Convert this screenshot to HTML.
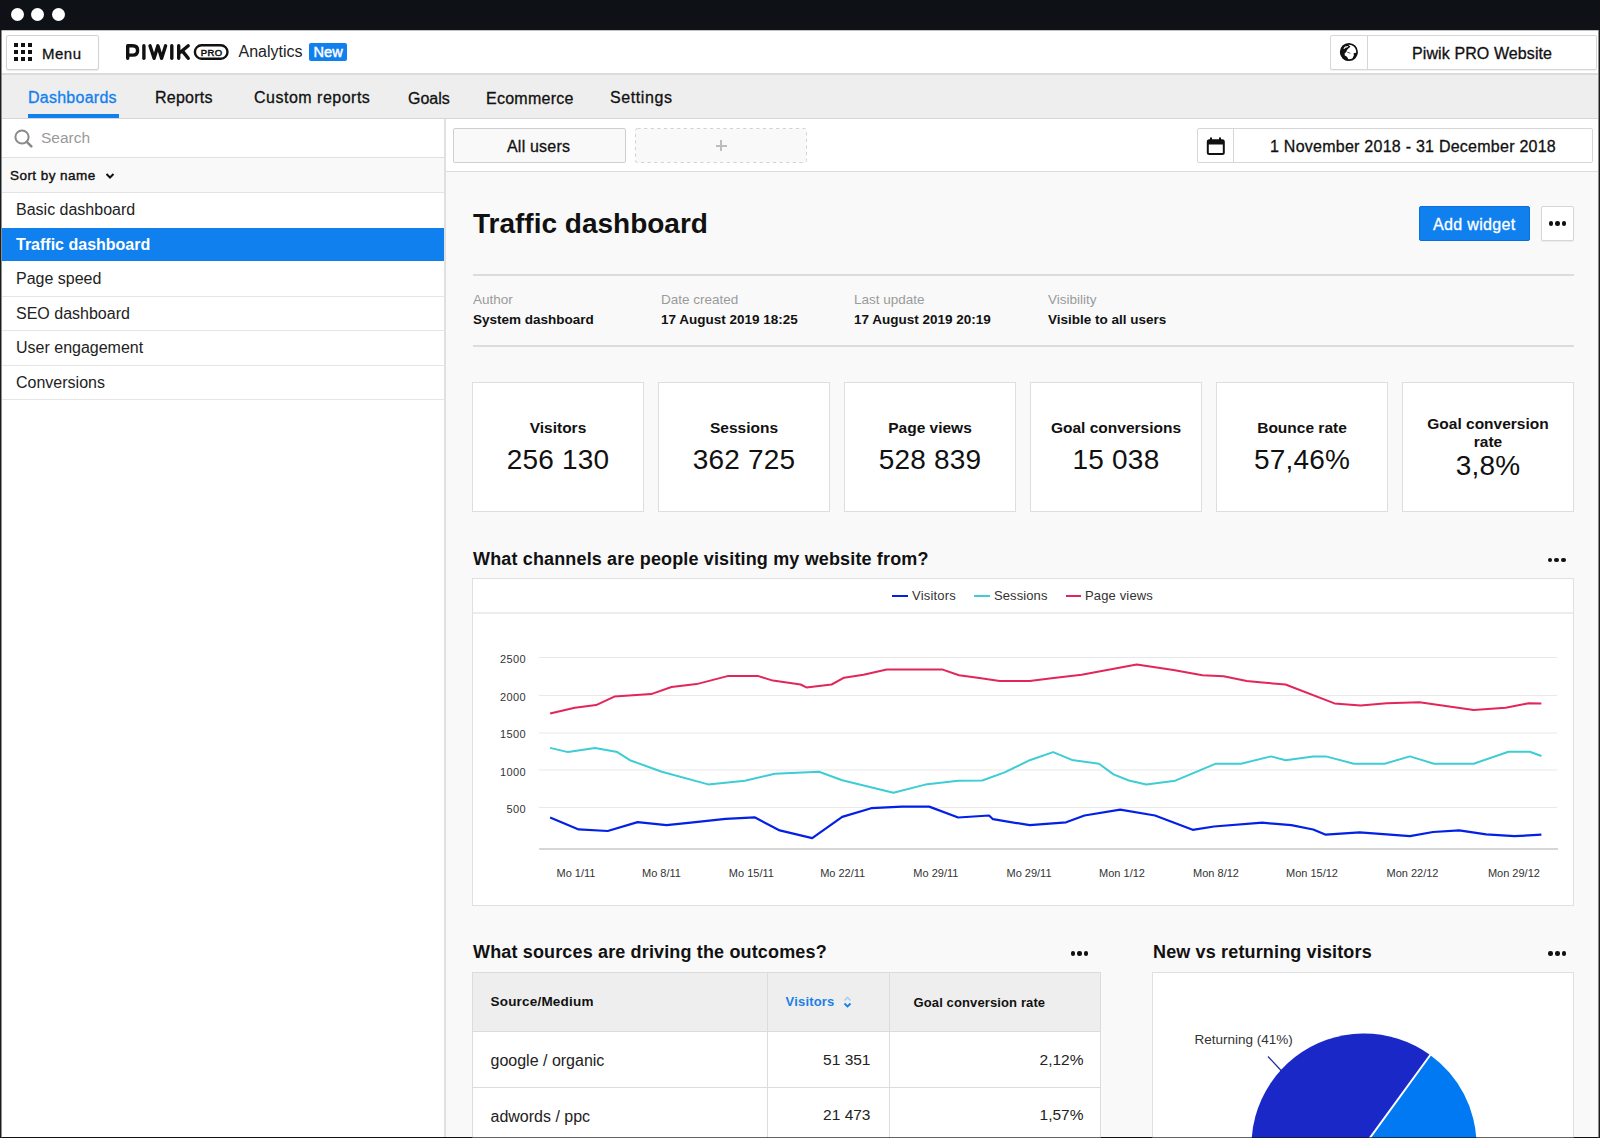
<!DOCTYPE html>
<html><head><meta charset="utf-8">
<style>
*{box-sizing:border-box;margin:0;padding:0}
html,body{width:1600px;height:1138px;overflow:hidden}
body{background:#0e1115;font-family:"Liberation Sans",sans-serif;color:#111;position:relative}
.a{position:absolute}
.t{position:absolute;line-height:1;white-space:nowrap}
.md{-webkit-text-stroke:0.3px currentColor}
.dot{position:absolute;width:13px;height:13px;border-radius:50%;background:#fff;top:8px}
.card{position:absolute;top:382px;width:172px;height:130px;background:#fff;border:1px solid #dedede}
.kl{position:absolute;left:0;width:100%;text-align:center;font-weight:700;font-size:15.5px;line-height:1;white-space:nowrap}
.kv{position:absolute;left:0;width:100%;text-align:center;font-size:28px;line-height:1;white-space:nowrap;letter-spacing:0.2px}
.sb{position:absolute;left:1px;width:443px;height:35px;border-bottom:1px solid #e6e6e6;background:#fff}
.sbt{position:absolute;left:15px;top:11px;font-size:16px;line-height:1;white-space:nowrap;color:#222}
.more{position:absolute;width:18px;height:5px}
.more i{position:absolute;top:0;width:4.5px;height:4.5px;border-radius:50%;background:#111}
</style></head><body>
<!-- traffic lights -->
<div class="dot" style="left:11px"></div>
<div class="dot" style="left:31px"></div>
<div class="dot" style="left:52px"></div>

<!-- page background -->
<div class="a" style="left:1px;top:30px;width:1597px;height:1107px;background:#f9f9f9"></div>
<!-- header -->
<div class="a" style="left:1px;top:30px;width:1597px;height:45px;background:#fff;border-bottom:2px solid #dcdcdc"></div>
<div class="a" style="left:6px;top:35px;width:93px;height:35px;border:1px solid #d2d2d2;border-radius:2px;background:#fff;box-shadow:0 1px 1px rgba(0,0,0,.08)"></div>
<svg class="a" style="left:14px;top:43px" width="18" height="18" viewBox="0 0 18 18" fill="#111">
<rect x="0" y="0" width="4" height="4"/><rect x="7" y="0" width="4" height="4"/><rect x="14" y="0" width="4" height="4"/>
<rect x="0" y="7" width="4" height="4"/><rect x="7" y="7" width="4" height="4"/><rect x="14" y="7" width="4" height="4"/>
<rect x="0" y="14" width="4" height="4"/><rect x="7" y="14" width="4" height="4"/><rect x="14" y="14" width="4" height="4"/>
</svg>
<div class="t md" style="left:42px;top:45.8px;font-size:15px;color:#111;letter-spacing:0.5px">Menu</div>

<!-- logo -->
<svg class="a" style="left:0;top:0" width="240" height="70" viewBox="0 0 240 70">
<g fill="none" stroke="#111" stroke-width="3.4" stroke-linecap="round" stroke-linejoin="round">
<path d="M127.7 58.3 V45.7 H132.8 Q137.6 45.7 137.6 50.4 Q137.6 55.1 132.8 55.1 H127.7"/>
<path d="M143.9 45.7 V58.3"/>
<path d="M150 45.8 L154.1 58.3 L157.9 45.8 L161.6 58.3 L165.6 45.8"/>
<path d="M171.8 45.7 V58.3"/>
<path d="M178.7 45.7 V58.3 M188.2 45.8 L179.8 52.8 M182.3 50.9 L188.2 58.3"/>
</g>
<rect x="194.9" y="45.3" width="32.6" height="13.4" rx="6.7" fill="none" stroke="#111" stroke-width="2.4"/>
</svg>
<div class="t" style="left:200.8px;top:48px;font-size:9.5px;color:#111;-webkit-text-stroke:0.5px #111;letter-spacing:0.35px">PRO</div>
<div class="t" style="left:238.5px;top:44px;font-size:16px;color:#222">Analytics</div>
<div class="a" style="left:309px;top:43px;width:38px;height:18px;background:#1180ef;border-radius:2px"></div>
<div class="t" style="left:313.5px;top:45px;font-size:14.5px;color:#fff;-webkit-text-stroke:0.45px #fff;letter-spacing:0.1px">New</div>

<!-- website selector -->
<div class="a" style="left:1330px;top:35px;width:267px;height:35px;border:1px solid #d6d6d6;border-radius:2px;background:#fff;box-shadow:0 1px 1px rgba(0,0,0,.06)"></div>
<div class="a" style="left:1367px;top:36px;width:1px;height:33px;background:#d6d6d6"></div>
<svg class="a" style="left:1336px;top:40px" width="26" height="24" viewBox="0 0 26 24">
<circle cx="12.9" cy="12" r="8.2" fill="#fff" stroke="#111" stroke-width="1.7"/>
<path d="M5,9 C6,6.5 9,5 12,4.5 L14.5,6.8 L12.6,8.2 L11,10 L10.4,11.8 L8.6,13.6 L8.8,15.6 L11,16.8 L12,18.5 L12.4,20.8 C8,20.3 5,17 4.5,13 Z" fill="#111"/>
<path d="M7.4,8.6 L9,6.6 L12.4,6.1 L11.6,7.3 L9.6,7.8 L8.3,8.9 Z" fill="#fff"/>
<path d="M17.6,13.2 L21.3,12.6 C21.2,15.8 19.5,18.6 16.6,20 L16.9,17.2 L17.9,15.6 Z" fill="#111"/>
<path d="M11.3,12.2 L14.3,13.3" stroke="#444" stroke-width="0.9"/>
</svg>
<div class="t md" style="left:1412px;top:45.5px;font-size:16px;color:#111;letter-spacing:0.1px">Piwik PRO Website</div>

<!-- nav -->
<div class="a" style="left:1px;top:75px;width:1597px;height:44px;background:#eeeeee;border-bottom:1px solid #d6d6d6"></div>
<div class="t md" style="left:28px;top:90px;font-size:16px;color:#1180ef;letter-spacing:0.25px">Dashboards</div>
<div class="a" style="left:28px;top:114px;width:91px;height:4px;background:#1180ef"></div>
<div class="t md" style="left:155px;top:90px;font-size:16px;color:#111;letter-spacing:0.25px">Reports</div>
<div class="t md" style="left:254px;top:90px;font-size:16px;color:#111;letter-spacing:0.5px">Custom reports</div>
<div class="t md" style="left:408px;top:91px;font-size:16px;color:#111;letter-spacing:0px">Goals</div>
<div class="t md" style="left:486px;top:91px;font-size:16px;color:#111;letter-spacing:0.25px">Ecommerce</div>
<div class="t md" style="left:610px;top:90px;font-size:16px;color:#111;letter-spacing:0.6px">Settings</div>

<!-- sidebar -->
<div class="a" style="left:1px;top:119px;width:444px;height:1018px;background:#fff;border-right:1px solid #e3e3e3"></div>
<div class="a" style="left:1px;top:157px;width:443px;height:36px;background:#f9f9f9;border-top:1px solid #e0e0e0;border-bottom:1px solid #e3e3e3"></div>
<svg class="a" style="left:14px;top:128.5px" width="19" height="19" viewBox="0 0 19 19">
<circle cx="8" cy="8" r="6.6" fill="none" stroke="#8a8a8a" stroke-width="2"/>
<path d="M12.8 12.8 L17.3 17.3" stroke="#8a8a8a" stroke-width="2.6" stroke-linecap="round"/>
</svg>
<div class="t" style="left:41px;top:130px;font-size:15.5px;color:#9a9a9a">Search</div>
<div class="t" style="left:10px;top:169px;font-size:13.5px;color:#111;-webkit-text-stroke:0.4px #111;letter-spacing:0.45px">Sort by name</div>
<svg class="a" style="left:105px;top:172px" width="10" height="8" viewBox="0 0 10 8"><path d="M1.5 2 L5 5.5 L8.5 2" fill="none" stroke="#111" stroke-width="2"/></svg>

<div class="sb" style="top:193px;height:35px;border-bottom:0"><div class="sbt" style="top:8.5px">Basic dashboard</div></div>
<div class="sb" style="top:228px;height:33px;background:#1180ef;border-bottom:0"><div class="sbt" style="top:8.5px;font-weight:700;color:#fff">Traffic dashboard</div></div>
<div class="sb" style="top:261px;height:36px"><div class="sbt" style="top:10px">Page speed</div></div>
<div class="sb" style="top:297px;height:34px"><div class="sbt" style="top:8.5px">SEO dashboard</div></div>
<div class="sb" style="top:331px;height:35px"><div class="sbt" style="top:9px">User engagement</div></div>
<div class="sb" style="top:366px;height:34px"><div class="sbt" style="top:8.5px">Conversions</div></div>

<div class="a" style="left:444px;top:119px;width:2px;height:1018px;background:#e0e0e0"></div>
<!-- segment bar -->
<div class="a" style="left:446px;top:119px;width:1152px;height:53px;background:#fff;border-bottom:1px solid #dcdcdc"></div>
<div class="a" style="left:453px;top:128px;width:173px;height:35px;background:#f9f9f9;border:1px solid #cfcfcf;border-radius:2px"></div>
<div class="t md" style="left:507px;top:139px;font-size:16px;color:#111;letter-spacing:0.2px">All users</div>
<svg class="a" style="left:634px;top:127px" width="175" height="38" viewBox="0 0 175 38"><rect x="1.5" y="1.5" width="171" height="34" rx="2" fill="#f9f9f9" stroke="#d2d2d2" stroke-width="1" stroke-dasharray="3.2 3.4"/></svg>
<div class="a" style="left:715.6px;top:144.6px;width:11px;height:2px;background:#bdbdbd"></div>
<div class="a" style="left:720.1px;top:140px;width:2px;height:11px;background:#bdbdbd"></div>

<div class="a" style="left:1197px;top:128px;width:396px;height:35px;background:#fff;border:1px solid #d6d6d6;border-radius:2px"></div>
<div class="a" style="left:1233px;top:129px;width:1px;height:33px;background:#d6d6d6"></div>
<svg class="a" style="left:1206px;top:137px" width="19" height="18" viewBox="0 0 19 18">
<rect x="1.8" y="3.2" width="16" height="13.8" rx="1.5" fill="none" stroke="#111" stroke-width="2"/>
<rect x="1.8" y="3.2" width="16" height="4.3" fill="#111"/>
<rect x="4" y="0.5" width="2" height="4" fill="#111"/><rect x="13" y="0.5" width="2" height="4" fill="#111"/>
</svg>
<div class="t md" style="left:1270px;top:139px;font-size:16px;color:#111;letter-spacing:0.25px">1 November 2018 - 31 December 2018</div>

<!-- title -->
<div class="t" style="left:473px;top:210px;font-size:28px;font-weight:700;color:#111">Traffic dashboard</div>
<div class="a" style="left:1419px;top:206px;width:111px;height:35px;background:#1180ef;border-radius:2px;border:1px solid #0a6fd6"></div>
<div class="t md" style="left:1433px;top:217px;font-size:16px;color:#fff;letter-spacing:0.35px">Add widget</div>
<div class="a" style="left:1541px;top:206px;width:33px;height:35px;background:#fff;border:1px solid #d6d6d6;border-radius:2px;box-shadow:0 1px 1px rgba(0,0,0,.06)"></div>
<div class="more" style="left:1548.6px;top:221.3px"><i style="left:0"></i><i style="left:6.7px"></i><i style="left:13.4px"></i></div>

<div class="a" style="left:473px;top:274px;width:1101px;height:2px;background:#dcdcdc"></div>
<div class="t" style="left:473px;top:293.3px;font-size:13.5px;color:#9b9b9b">Author</div>
<div class="t" style="left:473px;top:313px;font-size:13.5px;font-weight:700;color:#111">System dashboard</div>
<div class="t" style="left:661px;top:293.3px;font-size:13.5px;color:#9b9b9b">Date created</div>
<div class="t" style="left:661px;top:313px;font-size:13.5px;font-weight:700;color:#111">17 August 2019 18:25</div>
<div class="t" style="left:854px;top:293.3px;font-size:13.5px;color:#9b9b9b">Last update</div>
<div class="t" style="left:854px;top:313px;font-size:13.5px;font-weight:700;color:#111">17 August 2019 20:19</div>
<div class="t" style="left:1048px;top:293.3px;font-size:13.5px;color:#9b9b9b">Visibility</div>
<div class="t" style="left:1048px;top:313px;font-size:13.5px;font-weight:700;color:#111">Visible to all users</div>
<div class="a" style="left:473px;top:345px;width:1101px;height:2px;background:#dcdcdc"></div>

<!-- KPI cards -->
<div class="card" style="left:472px"><div class="kl" style="top:37px">Visitors</div><div class="kv" style="top:63px">256 130</div></div>
<div class="card" style="left:658px"><div class="kl" style="top:37px">Sessions</div><div class="kv" style="top:63px">362 725</div></div>
<div class="card" style="left:844px"><div class="kl" style="top:37px">Page views</div><div class="kv" style="top:63px">528 839</div></div>
<div class="card" style="left:1030px"><div class="kl" style="top:37px">Goal conversions</div><div class="kv" style="top:63px">15 038</div></div>
<div class="card" style="left:1216px"><div class="kl" style="top:37px">Bounce rate</div><div class="kv" style="top:63px">57,46%</div></div>
<div class="card" style="left:1402px"><div class="kl" style="top:33px">Goal conversion</div><div class="kl" style="top:51px">rate</div><div class="kv" style="top:69px">3,8%</div></div>

<!-- channels chart -->
<div class="t" style="left:473px;top:549.5px;font-size:18px;font-weight:700;color:#111;letter-spacing:0.15px">What channels are people visiting my website from?</div>
<div class="more" style="left:1547.8px;top:557.9px"><i style="left:0"></i><i style="left:6.7px"></i><i style="left:13.4px"></i></div>
<div class="a" style="left:472px;top:578px;width:1102px;height:328px;background:#fff;border:1px solid #e0e0e0"></div>
<div class="a" style="left:473px;top:612px;width:1100px;height:2px;background:#ececec"></div>
<div class="a" style="left:892px;top:595px;width:16px;height:2px;background:#0320e6"></div>
<div class="t" style="left:912px;top:589px;font-size:13px;color:#333;letter-spacing:0.2px">Visitors</div>
<div class="a" style="left:974px;top:595px;width:16px;height:2px;background:#3dcdd5"></div>
<div class="t" style="left:994px;top:589px;font-size:13px;color:#333;letter-spacing:0.1px">Sessions</div>
<div class="a" style="left:1066px;top:595px;width:15px;height:2px;background:#e3265a"></div>
<div class="t" style="left:1085px;top:589px;font-size:13px;color:#333;letter-spacing:0.15px">Page views</div>

<svg class="a" style="left:0;top:0" width="1600" height="1138" viewBox="0 0 1600 1138">
<g stroke="#e8e8e8" stroke-width="1">
<line x1="539" y1="657.5" x2="1557" y2="657.5"/>
<line x1="539" y1="695.5" x2="1557" y2="695.5"/>
<line x1="539" y1="733" x2="1557" y2="733"/>
<line x1="539" y1="770" x2="1557" y2="770"/>
<line x1="539" y1="807.5" x2="1557" y2="807.5"/>
</g>
<line x1="539" y1="849" x2="1558" y2="849" stroke="#d6d6d6" stroke-width="2"/>
<polyline fill="none" stroke="#e3265a" stroke-width="2" stroke-linejoin="round" points="550.1,713.5 574.8,707.7 596.1,705.1 614.4,696.6 651.2,694.1 671.5,687 696.6,684.1 727.5,676.1 758.4,676.1 772.9,680.6 800.6,684.5 806.4,687.4 831.6,684.5 844.1,677.7 863.5,674.8 886.7,669.6 942.7,669.6 959.1,675.2 979.4,677.9 999.7,681 1029.7,681 1051.6,678.3 1081.6,674.8 1136.7,664.6 1173.4,670 1202.4,675.2 1223.6,676.3 1246.8,681 1262.3,682.5 1285.5,684.5 1334.5,703.4 1360.6,705.4 1386.7,703.2 1419.5,702.3 1473.7,710 1505.6,707.7 1528.8,703.2 1541.4,703.4"/>
<polyline fill="none" stroke="#3dcdd5" stroke-width="2" stroke-linejoin="round" points="550.1,747.9 568,752.1 595.1,747.9 617.3,752.1 629.9,760.2 661.8,771.8 708.2,784.4 744.9,780.7 774.9,773.8 819,771.8 842.2,780.2 893.4,792.7 925.3,784.6 958.2,780.7 982.3,780.5 1004.6,772.4 1029.7,760.2 1053.1,752.1 1071.9,759.9 1099,763.7 1113.5,774.4 1128.9,780.5 1146.3,784.4 1175.3,780.7 1215.9,763.7 1241,763.7 1271,756.4 1285.5,760.2 1313.2,756.4 1325.8,756.4 1353.8,763.7 1384.7,763.7 1409.9,756.4 1434,763.7 1473.7,763.7 1508.5,751.8 1529.8,751.8 1541.4,756"/>
<polyline fill="none" stroke="#0320e6" stroke-width="2.2" stroke-linejoin="round" points="550.1,817.5 578.7,829.4 607.7,831 637.6,822.1 666.6,825.2 690.8,822.7 725.6,818.8 754.6,817.3 779.7,830.4 812.2,838.1 842.2,816.9 871.2,808.2 902.1,806.6 929.2,806.6 958.2,817.5 989.1,815.5 993,819.2 1029.7,825.2 1066.1,822.3 1084.5,815.5 1120.2,809.7 1155,815.5 1192.7,829.8 1214,826.5 1262.3,822.7 1291.3,825.2 1313.2,829.5 1325.8,834.7 1359.6,832.4 1386.7,834.3 1409.9,836.2 1433.1,832 1459.2,830.4 1486.2,834.3 1514.3,836.2 1541.4,834.7"/>
</svg>
<div class="t" style="left:486px;top:654.3px;width:40px;text-align:right;font-size:11px;color:#333;letter-spacing:0.4px">2500</div>
<div class="t" style="left:486px;top:692.3px;width:40px;text-align:right;font-size:11px;color:#333;letter-spacing:0.4px">2000</div>
<div class="t" style="left:486px;top:728.7px;width:40px;text-align:right;font-size:11px;color:#333;letter-spacing:0.4px">1500</div>
<div class="t" style="left:486px;top:766.5px;width:40px;text-align:right;font-size:11px;color:#333;letter-spacing:0.4px">1000</div>
<div class="t" style="left:486px;top:804.3px;width:40px;text-align:right;font-size:11px;color:#333;letter-spacing:0.4px">500</div>
<div class="t" style="left:526px;top:867.6px;width:100px;text-align:center;font-size:11px;color:#333">Mo 1/11</div>
<div class="t" style="left:611.5px;top:867.6px;width:100px;text-align:center;font-size:11px;color:#333">Mo 8/11</div>
<div class="t" style="left:701.4px;top:867.6px;width:100px;text-align:center;font-size:11px;color:#333">Mo 15/11</div>
<div class="t" style="left:792.7px;top:867.6px;width:100px;text-align:center;font-size:11px;color:#333">Mo 22/11</div>
<div class="t" style="left:885.9px;top:867.6px;width:100px;text-align:center;font-size:11px;color:#333">Mo 29/11</div>
<div class="t" style="left:979px;top:867.6px;width:100px;text-align:center;font-size:11px;color:#333">Mo 29/11</div>
<div class="t" style="left:1072px;top:867.6px;width:100px;text-align:center;font-size:11px;color:#333">Mon 1/12</div>
<div class="t" style="left:1166px;top:867.6px;width:100px;text-align:center;font-size:11px;color:#333">Mon 8/12</div>
<div class="t" style="left:1262px;top:867.6px;width:100px;text-align:center;font-size:11px;color:#333">Mon 15/12</div>
<div class="t" style="left:1362.5px;top:867.6px;width:100px;text-align:center;font-size:11px;color:#333">Mon 22/12</div>
<div class="t" style="left:1463.9px;top:867.6px;width:100px;text-align:center;font-size:11px;color:#333">Mon 29/12</div>

<!-- sources table -->
<div class="t" style="left:473px;top:942.7px;font-size:18px;font-weight:700;color:#111;letter-spacing:0.15px">What sources are driving the outcomes?</div>
<div class="more" style="left:1070.6px;top:951.4px"><i style="left:0"></i><i style="left:6.7px"></i><i style="left:13.4px"></i></div>
<div class="a" style="left:472px;top:972px;width:629px;height:170px;background:#fff;border:1px solid #dcdcdc"></div>
<div class="a" style="left:473px;top:973px;width:627px;height:58px;background:#eeeeee"></div>
<div class="a" style="left:473px;top:1031px;width:627px;height:1px;background:#dcdcdc"></div>
<div class="a" style="left:473px;top:1087px;width:627px;height:1px;background:#dcdcdc"></div>
<div class="a" style="left:767px;top:973px;width:1px;height:170px;background:#dcdcdc"></div>
<div class="a" style="left:889px;top:973px;width:1px;height:170px;background:#dcdcdc"></div>
<div class="t" style="left:490.5px;top:995px;font-size:13.5px;font-weight:700;color:#111;letter-spacing:0.2px">Source/Medium</div>
<div class="t" style="left:785.5px;top:995px;font-size:13px;font-weight:700;color:#1a7fe8;letter-spacing:0.2px">Visitors</div>
<svg class="a" style="left:843px;top:996px" width="9" height="12" viewBox="0 0 9 12"><path d="M1.5 4.5 L4.5 1.5 L7.5 4.5" fill="none" stroke="#1a7fe8" stroke-opacity="0.3" stroke-width="1.6"/><path d="M1.5 7.5 L4.5 10.5 L7.5 7.5" fill="none" stroke="#1180ef" stroke-width="1.8"/></svg>
<div class="t" style="left:913.5px;top:995.5px;font-size:13px;font-weight:700;color:#111;letter-spacing:0.12px">Goal conversion rate</div>
<div class="t" style="left:490.5px;top:1053.3px;font-size:16px;color:#222">google / organic</div>
<div class="t" style="left:770px;top:1052px;width:100.5px;text-align:right;font-size:15.5px;color:#222">51 351</div>
<div class="t" style="left:900px;top:1052px;width:183.5px;text-align:right;font-size:15.5px;color:#222">2,12%</div>
<div class="t" style="left:490.5px;top:1108.5px;font-size:16px;color:#222">adwords / ppc</div>
<div class="t" style="left:770px;top:1107px;width:100.5px;text-align:right;font-size:15.5px;color:#222">21 473</div>
<div class="t" style="left:900px;top:1107px;width:183.5px;text-align:right;font-size:15.5px;color:#222">1,57%</div>

<!-- new vs returning -->
<div class="t" style="left:1153px;top:942.9px;font-size:18px;font-weight:700;color:#111;letter-spacing:0.15px">New vs returning visitors</div>
<div class="more" style="left:1548.4px;top:951.4px"><i style="left:0"></i><i style="left:6.7px"></i><i style="left:13.4px"></i></div>
<div class="a" style="left:1152px;top:972px;width:422px;height:170px;background:#fff;border:1px solid #e0e0e0"></div>
<svg class="a" style="left:0;top:0" width="1600" height="1138" viewBox="0 0 1600 1138">
<path d="M1364 1146 L1430.2 1054.9 A112.6 112.6 0 1 1 1259.3 1187.4 Z" fill="#0079f2"/>
<path d="M1364 1146 L1259.3 1187.4 A112.6 112.6 0 0 1 1430.2 1054.9 Z" fill="#1a28c8"/>
<line x1="1364" y1="1146" x2="1431" y2="1054" stroke="#fff" stroke-width="2"/>
<line x1="1268" y1="1056.5" x2="1281.5" y2="1071" stroke="#1c2a9c" stroke-width="1.2"/>
</svg>
<div class="t" style="left:1194.5px;top:1033px;font-size:13.5px;color:#333">Returning (41%)</div>

<!-- frame edges -->
<div class="a" style="left:0;top:30px;width:1px;height:1108px;background:#1a1d20"></div>
<div class="a" style="left:1px;top:30px;width:1px;height:1108px;background:#8c8e90"></div>
<div class="a" style="left:0;top:30px;width:1600px;height:1px;background:rgba(14,17,21,0.25)"></div>
<div class="a" style="left:1599px;top:30px;width:1px;height:1108px;background:#1a1d20"></div>
<div class="a" style="left:1598px;top:30px;width:1px;height:1108px;background:#8a8c8e"></div>
<div class="a" style="left:0;top:1137px;width:1600px;height:1px;background:rgba(14,17,21,0.66)"></div>
</body></html>
